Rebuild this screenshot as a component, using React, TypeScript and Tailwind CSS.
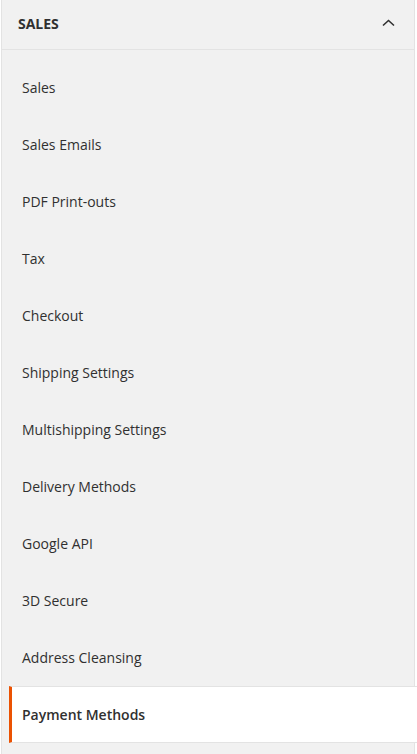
const items = [
  "Sales",
  "Sales Emails",
  "PDF Print-outs",
  "Tax",
  "Checkout",
  "Shipping Settings",
  "Multishipping Settings",
  "Delivery Methods",
  "Google API",
  "3D Secure",
  "Address Cleansing",
  "Payment Methods",
];

export default function App() {
  return (
    <div className="min-h-[754px] bg-white pl-[1px] font-['Open_Sans',sans-serif] text-[#303030]">
      <div className="w-[414px] min-h-[754px] border-x border-[#e3e3e3] bg-[#f1f1f1]">
        <div className="flex h-[50px] items-center justify-between border-b border-[#e3e3e3] pb-[3px] pl-[16px] pr-[19px]">
          <span className="text-[14px] font-bold uppercase">Sales</span>
          <svg width="13" height="8" viewBox="0 0 13 8" fill="none">
            <path d="M1 6.5 L6.5 1.5 L12 6.5" stroke="#303030" strokeWidth="1.6" />
          </svg>
        </div>
        <ul className="pt-[9px]">
          {items.map((item) => {
            const active = item === "Payment Methods";
            return active ? (
              <li
                key={item}
                className="ml-[7px] mr-[-3px] flex h-[57px] items-center border-y border-l-[3px] border-[#e3e3e3] border-l-[#eb5202] bg-white pl-[10px] text-[14px] font-semibold"
              >
                {item}
              </li>
            ) : (
              <li key={item} className="flex h-[57px] items-center pl-[20px] text-[14px]">
                {item}
              </li>
            );
          })}
        </ul>
      </div>
    </div>
  );
}
